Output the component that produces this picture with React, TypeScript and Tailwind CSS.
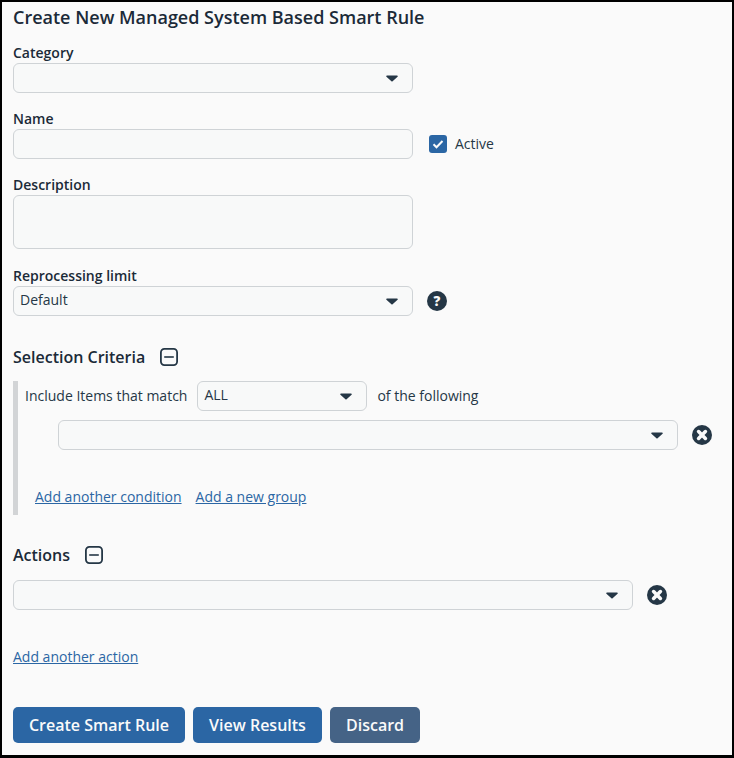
import React from 'react';

const FONT = "font-['Open_Sans',sans-serif]";

const Caret = () => (
  <svg width="12" height="7" viewBox="0 0 14 8" className="shrink-0">
    <path d="M1.2 0.5h11.6c.9 0 1.3 1 .7 1.6L7.7 7.2c-.4.4-1 .4-1.4 0L.5 2.1C-.1 1.5.3.5 1.2.5z" fill="#253746" />
  </svg>
);

const Select = ({ value, className }: { value?: string; className: string }) => (
  <div className={`h-[30px] flex items-center justify-between pl-[6px] pr-[14px] bg-[#f8f9f9] border border-[#cfd3d6] rounded-[6px] ${className}`}>
    <span className="text-[14px] leading-none text-[#253746] -mt-[2px]">{value}</span>
    <Caret />
  </div>
);

const Label = ({ children }: { children: React.ReactNode }) => (
  <label className="block text-[14px] leading-[20px] font-semibold text-[#1b2a38]">{children}</label>
);

const RemoveIcon = () => (
  <svg width="20" height="20" viewBox="0 0 20 20" className="shrink-0">
    <circle cx="10" cy="10" r="10" fill="#253746" />
    <path d="M6.6 6.6l6.8 6.8M13.4 6.6l-6.8 6.8" stroke="#fafafa" strokeWidth="3.6" strokeLinecap="round" />
  </svg>
);

const Collapse = () => (
  <svg width="18" height="18" viewBox="0 0 18 18" className="shrink-0">
    <rect x="0.9" y="0.9" width="16.2" height="16.2" rx="3.5" fill="none" stroke="#253746" strokeWidth="1.8" />
    <path d="M4.2 9h9.6" stroke="#253746" strokeWidth="1.6" />
  </svg>
);

const Help = () => (
  <svg width="20" height="20" viewBox="0 0 20 20" className="shrink-0">
    <circle cx="10" cy="10" r="10" fill="#253746" />
    <text x="10" y="14.6" textAnchor="middle" fontSize="13.5" fontWeight="800" fill="#fafafa" fontFamily="Open Sans, sans-serif">?</text>
  </svg>
);

const LinkText = ({ children }: { children: React.ReactNode }) => (
  <a className="text-[14px] leading-[20px] text-[#2b66a4] underline">{children}</a>
);

const PrimaryButton = ({ children, className }: { children: React.ReactNode; className: string }) => (
  <button className={`h-[36px] rounded-[5px] text-[16px] font-semibold text-[#fafafa] ${className}`}>{children}</button>
);

export default function App() {
  return (
    <div className={`${FONT} w-[734px] h-[758px] bg-[#fafafa] border-black border-l-2 border-r-2 border-t-2 border-b-[3px] pl-[11px] text-[#253746] overflow-hidden`}>
      <h1 className="text-[18px] leading-[24px] font-semibold text-[#1b2a38] mt-[3px]">Create New Managed System Based Smart Rule</h1>

      <div className="mt-[14px]">
        <Label>Category</Label>
        <Select className="w-[400px]" />
      </div>

      <div className="mt-[16px]">
        <Label>Name</Label>
        <div className="flex items-center">
          <div className="w-[400px] h-[30px] bg-[#f8f9f9] border border-[#cfd3d6] rounded-[6px]" />
          <div className="ml-[16px] w-[18px] h-[18px] rounded-[3px] bg-[#2b66a4] flex items-center justify-center">
            <svg width="12" height="10" viewBox="0 0 12 10"><path d="M1.5 5.2l3 3 6-6.2" fill="none" stroke="#fafafa" strokeWidth="2" /></svg>
          </div>
          <span className="ml-[8px] text-[14px] text-[#253746] -mt-[2px]">Active</span>
        </div>
      </div>

      <div className="mt-[16px]">
        <Label>Description</Label>
        <div className="w-[400px] h-[54px] bg-[#f8f9f9] border border-[#cfd3d6] rounded-[6px]" />
      </div>

      <div className="mt-[17px]">
        <Label>Reprocessing limit</Label>
        <div className="flex items-center">
          <Select value="Default" className="w-[400px]" />
          <span className="ml-[14px]"><Help /></span>
        </div>
      </div>

      <div className="flex items-center mt-[29px] h-[24px]">
        <h2 className="text-[16px] font-semibold text-[#1b2a38]">Selection Criteria</h2>
        <span className="ml-[15px]"><Collapse /></span>
      </div>

      <div className="mt-[12px] border-l-[5px] border-[#d2d4d6] pl-[7px] h-[134px]">
        <div className="flex items-center h-[30px]">
          <span className="text-[14px] text-[#253746] -mt-[2px]">Include Items that match</span>
          <Select value="ALL" className="w-[170px] ml-[10px]" />
          <span className="ml-[10px] text-[14px] text-[#253746] -mt-[2px]">of the following</span>
        </div>
        <div className="flex items-center mt-[9px] ml-[33px]">
          <Select className="w-[620px]" />
          <span className="ml-[14px]"><RemoveIcon /></span>
        </div>
        <div className="flex gap-[14px] ml-[10px] mt-[37px]">
          <LinkText>Add another condition</LinkText>
          <LinkText>Add a new group</LinkText>
        </div>
      </div>

      <div className="flex items-center mt-[28px] h-[24px]">
        <h2 className="text-[16px] font-semibold text-[#1b2a38]">Actions</h2>
        <span className="ml-[15px]"><Collapse /></span>
      </div>

      <div className="flex items-center mt-[13px]">
        <Select className="w-[620px]" />
        <span className="ml-[14px]"><RemoveIcon /></span>
      </div>

      <div className="mt-[34px] h-[24px]">
        <LinkText>Add another action</LinkText>
      </div>

      <div className="flex gap-[8px] mt-[39px]">
        <PrimaryButton className="w-[172px] bg-[#2b66a4]">Create Smart Rule</PrimaryButton>
        <PrimaryButton className="w-[129px] bg-[#2b66a4]">View Results</PrimaryButton>
        <PrimaryButton className="w-[90px] bg-[#456386]">Discard</PrimaryButton>
      </div>
    </div>
  );
}
